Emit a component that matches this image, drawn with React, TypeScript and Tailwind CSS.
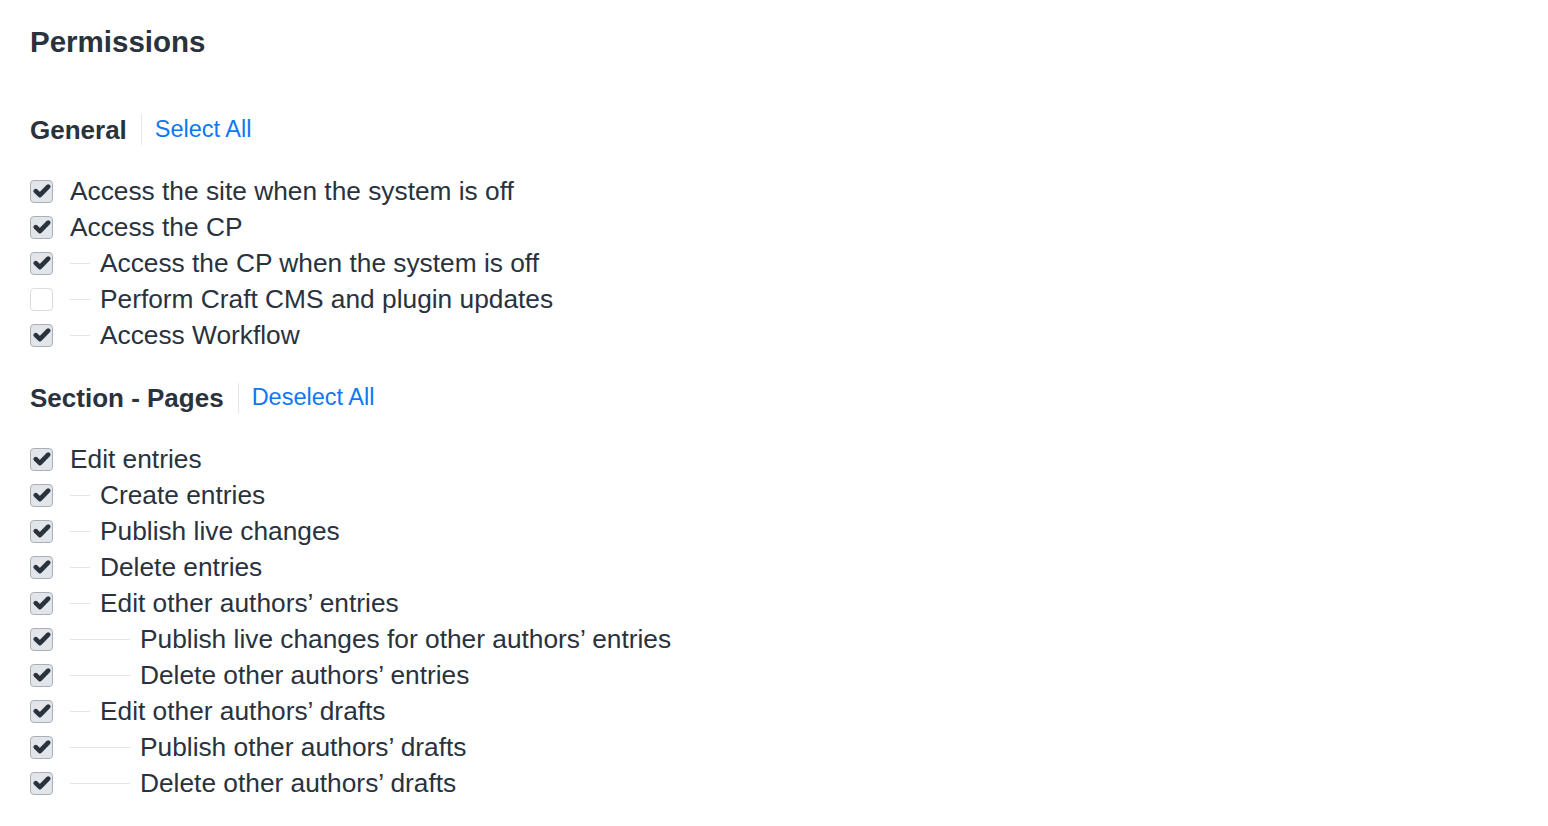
import React from "react";

type Perm = { label: string; level: number; checked: boolean };

const general: Perm[] = [
  { label: "Access the site when the system is off", level: 0, checked: true },
  { label: "Access the CP", level: 0, checked: true },
  { label: "Access the CP when the system is off", level: 1, checked: true },
  { label: "Perform Craft CMS and plugin updates", level: 1, checked: false },
  { label: "Access Workflow", level: 1, checked: true },
];

const pages: Perm[] = [
  { label: "Edit entries", level: 0, checked: true },
  { label: "Create entries", level: 1, checked: true },
  { label: "Publish live changes", level: 1, checked: true },
  { label: "Delete entries", level: 1, checked: true },
  { label: "Edit other authors\u2019 entries", level: 1, checked: true },
  { label: "Publish live changes for other authors\u2019 entries", level: 2, checked: true },
  { label: "Delete other authors\u2019 entries", level: 2, checked: true },
  { label: "Edit other authors\u2019 drafts", level: 1, checked: true },
  { label: "Publish other authors\u2019 drafts", level: 2, checked: true },
  { label: "Delete other authors\u2019 drafts", level: 2, checked: true },
];

function Checkbox({ checked }: { checked: boolean }) {
  if (!checked) {
    return <span className="w-[23px] h-[23px] shrink-0 rounded-[4px] border-[1.5px] border-[#d8dce1] bg-white" />;
  }
  return (
    <span className="w-[23px] h-[23px] shrink-0 rounded-[4px] border-[1.5px] border-[#a8b0b9] bg-[#e2e6ea] flex items-center justify-center">
      <svg width="18" height="16" viewBox="0 0 18 16">
        <path d="M2.8 8.2 L6.9 12.2 L15.2 3.6" fill="none" stroke="#29323d" strokeWidth="4.6" strokeLinecap="round" strokeLinejoin="round" />
      </svg>
    </span>
  );
}

function Row({ p }: { p: Perm }) {
  return (
    <div className="h-9 flex items-center">
      <Checkbox checked={p.checked} />
      <div className="ml-[17px] flex items-center">
        {p.level === 1 && <span className="w-5 h-px bg-[#e1e4e8] mr-[10px]" />}
        {p.level === 2 && <span className="w-[60px] h-px bg-[#e1e4e8] mr-[10px]" />}
        <span className="text-[26.3px] leading-9">{p.label}</span>
      </div>
    </div>
  );
}

function Section({ title, action, items }: { title: string; action: string; items: Perm[] }) {
  return (
    <section>
      <div className="h-9 flex items-center pt-[2px]">
        <h3 className="font-bold text-[26px]">{title}</h3>
        <span className="w-px h-[30px] bg-[#e6e8eb] ml-[14px] mr-[13px]" />
        <a className="text-[23.5px] text-[#0d78f2]">{action}</a>
      </div>
      <div className="mt-[26px]">
        {items.map((p) => (
          <Row key={p.label} p={p} />
        ))}
      </div>
    </section>
  );
}

export default function App() {
  return (
    <div className="min-h-screen bg-white text-[#29323d] pl-[30px] pt-6" style={{ fontFamily: '"Liberation Sans", Arial, sans-serif' }}>
      <h2 className="font-bold text-[29.5px] leading-9 h-9">Permissions</h2>
      <div className="mt-[51px] flex flex-col gap-[26px]">
        <Section title="General" action="Select All" items={general} />
        <Section title="Section - Pages" action="Deselect All" items={pages} />
      </div>
    </div>
  );
}
